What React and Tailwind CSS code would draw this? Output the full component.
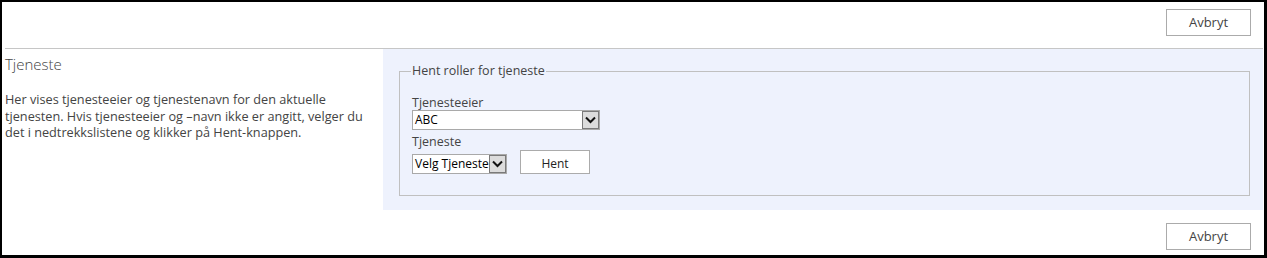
import React from "react";

const Chevron = () => (
  <svg width="11" height="8" viewBox="0 0 11 8" fill="none">
    <path d="M1 1.5 L5.5 6 L10 1.5" stroke="#111" strokeWidth="2" />
  </svg>
);

const FakeSelect = ({ value, width }) => (
  <div className={`flex h-[20px] items-stretch border border-[#a9a9a9] bg-white ${width}`}>
    <div className="flex flex-1 items-center pl-[2px] text-[12px] leading-none text-black">{value}</div>
    <div className="flex w-[17px] items-center justify-center border border-[#7a7a7a] bg-[#dcdcdc]">
      <Chevron />
    </div>
  </div>
);

const CancelButton = () => (
  <button
    type="button"
    className="h-[27px] w-[85px] border border-[#ababab] bg-white text-[13px] text-[#444]"
  >
    Avbryt
  </button>
);

export default function App() {
  return (
    <div
      className="flex h-[258px] w-[1267px] flex-col border-t-2 border-r-[3px] border-b-[3px] border-l-2 border-black bg-white text-[#444]"
      style={{ fontFamily: '"Open Sans", "Noto Sans", sans-serif' }}
    >
      <div className="flex h-[46px] justify-end pt-[7px] pr-[13px]">
        <CancelButton />
      </div>

      <div className="ml-[3px] mr-[1px] border-t border-[#c6c6c6]" />

      <div className="ml-[3px] mr-[1px] flex">
        <div className="w-[378px] pt-[5px]">
          <h2 className="text-[15px] font-light leading-[20px] text-[#444]">Tjeneste</h2>
          <p className="mt-[17px] w-[365px] text-[12.7px] leading-[16.5px] text-[#444]">
            Her vises tjenesteeier og tjenestenavn for den aktuelle tjenesten. Hvis tjenesteeier og
            –navn ikke er angitt, velger du det i nedtrekkslistene og klikker på Hent-knappen.
          </p>
        </div>

        <div className="flex-1 bg-[#eef2fd] pt-[14px] pr-[13px] pb-[14px] pl-[16px]">
          <fieldset className="h-[133px] border border-[#c0c0c0] px-[12px] pt-[16px]">
            <legend className="-ml-[1px] px-[1px] text-[12.5px] leading-[16px] text-[#444]">
              Hent roller for tjeneste
            </legend>
            <div className="text-[12.5px] leading-[15px] text-[#444]">Tjenesteeier</div>
            <FakeSelect value="ABC" width="w-[188px]" />
            <div className="mt-[3px] text-[12.5px] leading-[17px] text-[#444]">Tjeneste</div>
            <div className="flex items-end gap-[13px]">
              <FakeSelect value="Velg Tjeneste" width="w-[95px]" />
              <button
                type="button"
                className="h-[24px] w-[70px] border border-[#ababab] bg-white pt-[4px] text-[12px] leading-none text-[#222]"
              >
                Hent
              </button>
            </div>
          </fieldset>
        </div>
      </div>

      <div className="flex justify-end pt-[13px] pr-[13px]">
        <CancelButton />
      </div>
    </div>
  );
}
